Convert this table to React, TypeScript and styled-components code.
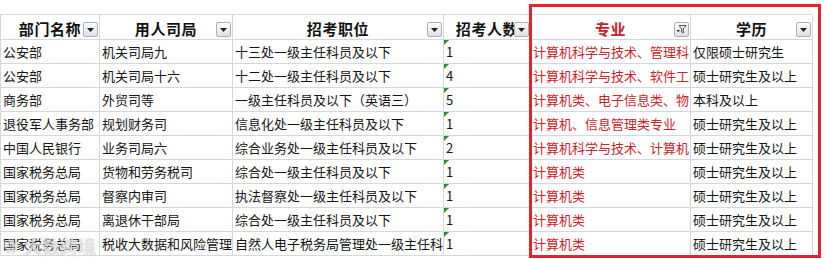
import React, { FC } from 'react'
import styled, { createGlobalStyle } from 'styled-components'

type Row = {
  dept: string,
  office: string,
  post: string,
  count: string,
  major: string,
  edu: string,
}

// only the part of each cell that the sheet shows
const rows: Row[] = [
  { dept: '公安部', office: '机关司局九', post: '十三处一级主任科员及以下', count: '1', major: '计算机科学与技术、管理科', edu: '仅限硕士研究生' },
  { dept: '公安部', office: '机关司局十六', post: '十二处一级主任科员及以下', count: '4', major: '计算机科学与技术、软件工', edu: '硕士研究生及以上' },
  { dept: '商务部', office: '外贸司等', post: '一级主任科员及以下（英语三）', count: '5', major: '计算机类、电子信息类、物', edu: '本科及以上' },
  { dept: '退役军人事务部', office: '规划财务司', post: '信息化处一级主任科员及以下', count: '1', major: '计算机、信息管理类专业', edu: '硕士研究生及以上' },
  { dept: '中国人民银行', office: '业务司局六', post: '综合业务处一级主任科员及以下', count: '2', major: '计算机科学与技术、计算机', edu: '硕士研究生及以上' },
  { dept: '国家税务总局', office: '货物和劳务税司', post: '综合处一级主任科员及以下', count: '1', major: '计算机类', edu: '硕士研究生及以上' },
  { dept: '国家税务总局', office: '督察内审司', post: '执法督察处一级主任科员及以下', count: '1', major: '计算机类', edu: '硕士研究生及以上' },
  { dept: '国家税务总局', office: '离退休干部局', post: '综合处一级主任科员及以下', count: '1', major: '计算机类', edu: '硕士研究生及以上' },
  { dept: '国家税务总局', office: '税收大数据和风险管理', post: '自然人电子税务局管理处一级主任科', count: '1', major: '计算机类', edu: '硕士研究生及以上' },
]

const headers = ['部门名称', '用人司局', '招考职位', '招考人数', '专业', '学历']

const GlobalStyle = createGlobalStyle`
  html, body {
    margin: 0;
    padding: 0;
    background: #fff;
  }
  body {
    font-family: "Noto Sans CJK SC", "Liberation Sans", sans-serif;
  }
`

const DropButton: FC<{ filtered?: boolean }> = ({ filtered }) => (
  <DropBox>
    {filtered ? (
      <svg width="11" height="11" viewBox="0 0 11 11">
        <path d="M3 1.5 H10 L7.3 4.8 V9 L5.7 8 V4.8 Z" fill="none" stroke="#444" strokeWidth="0.9" />
        <path d="M0.5 6 H4 L2.25 8.2 Z" fill="#333" />
      </svg>
    ) : (
      <svg width="7" height="4" viewBox="0 0 7 4">
        <path d="M0 0 H7 L3.5 4 Z" fill="#222" />
      </svg>
    )}
  </DropBox>
)

export default function App() {
  return (
    <Page>
      <GlobalStyle />
      <Sheet>
        {headers.map((h, i) => (
          <HeadCell key={h} $red={i === 4}>
            <HeadText>{h}</HeadText>
            <DropButton filtered={i === 4} />
          </HeadCell>
        ))}
        {rows.map((r, idx) => (
          <React.Fragment key={idx}>
            <Cell>{r.dept}</Cell>
            <Cell>{r.office}</Cell>
            <Cell>{r.post}</Cell>
            <Cell>
              <TextFlag />
              {r.count}
            </Cell>
            <Cell $red>{r.major}</Cell>
            <Cell>{r.edu}</Cell>
          </React.Fragment>
        ))}
      </Sheet>
      <Highlight />
      <Watermark>
        <WaterLogo>✿</WaterLogo>
        大数跨境
      </Watermark>
    </Page>
  )
}

const Page = styled.div`
  position: relative;
  width: 826px;
  height: 259px;
  overflow: hidden;
  padding-top: 14px;
  box-sizing: border-box;
  background: #fff;
`

const Sheet = styled.div`
  display: grid;
  grid-template-columns: 99px 133px 211px 87px 160px 122px;
  grid-auto-rows: 24px;
  grid-template-rows: 25px;
  width: 812px;
  border-top: 1px solid #d3d8e0;
  border-left: 1px solid #d3d8e0;
  box-sizing: border-box;
`

const HeadCell = styled.div<{ $red?: boolean }>`
  position: relative;
  display: flex;
  align-items: center;
  justify-content: center;
  border-right: 1px solid #d3d8e0;
  border-bottom: 1px solid #d3d8e0;
  font-size: 15px;
  font-weight: 700;
  color: ${p => (p.$red ? '#c8202a' : '#111')};
  overflow: hidden;
  white-space: nowrap;
`

const HeadText = styled.span`
  padding-top: 2px;
  letter-spacing: 0.6px;
`

const DropBox = styled.span`
  position: absolute;
  right: 1px;
  bottom: 2px;
  width: 15px;
  height: 15px;
  box-sizing: border-box;
  display: flex;
  align-items: center;
  justify-content: center;
  border: 1px solid #a9b0ba;
  border-radius: 2px;
  background: linear-gradient(#fbfcfd, #dde1e7);
`

const Cell = styled.div<{ $red?: boolean }>`
  position: relative;
  display: flex;
  align-items: flex-end;
  padding: 0 0 2px 2px;
  border-right: 1px solid #d3d8e0;
  border-bottom: 1px solid #d3d8e0;
  font-size: 13px;
  line-height: 18px;
  color: ${p => (p.$red ? '#c8242c' : '#141414')};
  white-space: nowrap;
  overflow: hidden;
  box-sizing: border-box;
`

const TextFlag = styled.span`
  position: absolute;
  left: 0;
  top: 0;
  width: 0;
  height: 0;
  border-top: 5px solid #2f8a2f;
  border-right: 5px solid transparent;
`

const Highlight = styled.div`
  position: absolute;
  left: 529px;
  top: 4px;
  width: 292px;
  height: 254px;
  border: 3px solid #e3252b;
  box-sizing: border-box;
  pointer-events: none;
`

const Watermark = styled.div`
  position: absolute;
  left: 3px;
  top: 235px;
  display: flex;
  align-items: center;
  gap: 5px;
  font-size: 18px;
  line-height: 22px;
  font-weight: 700;
  color: rgba(255, 255, 255, 0.6);
  text-shadow: 0 0 1px rgba(110, 110, 110, 0.5);
  pointer-events: none;
`

const WaterLogo = styled.span`
  font-size: 16px;
`
